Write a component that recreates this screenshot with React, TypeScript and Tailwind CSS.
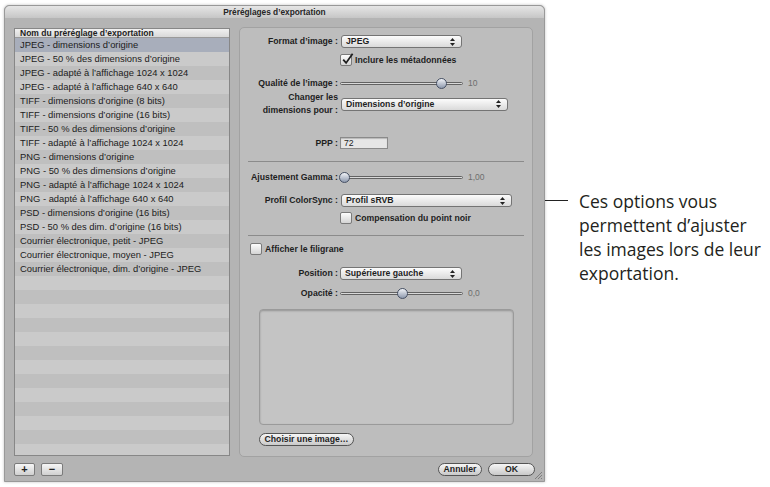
import React from "react";

const presets = [
  "JPEG - dimensions d’origine",
  "JPEG - 50 % des dimensions d’origine",
  "JPEG - adapté à l’affichage 1024 x 1024",
  "JPEG - adapté à l’affichage 640 x 640",
  "TIFF - dimensions d’origine (8 bits)",
  "TIFF - dimensions d’origine (16 bits)",
  "TIFF - 50 % des dimensions d’origine",
  "TIFF - adapté à l’affichage 1024 x 1024",
  "PNG - dimensions d’origine",
  "PNG - 50 % des dimensions d’origine",
  "PNG - adapté à l’affichage 1024 x 1024",
  "PNG - adapté à l’affichage 640 x 640",
  "PSD - dimensions d’origine (16 bits)",
  "PSD - 50 % des dim. d’origine (16 bits)",
  "Courrier électronique, petit - JPEG",
  "Courrier électronique, moyen - JPEG",
  "Courrier électronique, dim. d’origine - JPEG",
];

function Arrows() {
  return (
    <svg width="5" height="8" viewBox="0 0 5 8">
      <polygon points="2.5,0 5,3 0,3" fill="#222" />
      <polygon points="0,5 5,5 2.5,8" fill="#222" />
    </svg>
  );
}

function Popup({ text, className }: { text: string; className: string }) {
  return (
    <div
      className={`flex h-[13px] items-center justify-between rounded-[3px] border border-[#747474] bg-linear-to-b from-[#fcfcfc] to-[#dadada] pl-[4px] pr-[6px] text-[8.7px] font-bold leading-none text-[#1e1e1e] ${className}`}
    >
      <span>{text}</span>
      <Arrows />
    </div>
  );
}

function Check({ checked }: { checked?: boolean }) {
  return (
    <div className="relative h-[12px] w-[12px] shrink-0 rounded-[2px] border border-[#7a7a7a] bg-linear-to-b from-[#fdfdfd] to-[#d4d4d4]">
      {checked && (
        <svg className="absolute -top-[2px] left-0" width="13" height="13" viewBox="0 0 13 13">
          <path d="M2.2 6.6 L5.1 9.9 L11.6 0.8" fill="none" stroke="#1e1e1e" strokeWidth="1.8" />
        </svg>
      )}
    </div>
  );
}

function Slider({ knob, value }: { knob: string; value: string }) {
  return (
    <div className="flex items-center">
      <div className="relative h-[11px] w-[123px]">
        <div className="absolute left-0 right-0 top-[4px] h-[3px] rounded-full border border-[#626262] bg-[#d9d9d9]" />
        <div
          className={`absolute top-0 h-[11px] w-[11px] rounded-full border-[1.5px] border-[#465064] bg-linear-to-b from-[#f2f4f8] to-[#8f9aae] ${knob}`}
        />
      </div>
      <span className="ml-[5px] text-[8.5px] leading-none text-[#6e6e6e]">{value}</span>
    </div>
  );
}

function Label({ children }: { children: React.ReactNode }) {
  return (
    <div className="w-[98px] shrink-0 text-right text-[8.7px] font-bold leading-[13px] text-[#1e1e1e]">
      {children}
    </div>
  );
}

function Pill({ children, className }: { children: React.ReactNode; className: string }) {
  return (
    <div
      className={`flex h-[13px] items-center justify-center rounded-full border-[1.5px] border-[#545454] bg-linear-to-b from-[#f6f6f6] to-[#c9c9c9] text-[8.7px] font-bold leading-none text-[#1e1e1e] ${className}`}
    >
      {children}
    </div>
  );
}

export default function App() {
  const rows = Array.from({ length: 30 }, (_, i) => presets[i] ?? "");

  return (
    <div className="flex min-h-[487px] w-[770px] items-start bg-white font-['Liberation_Sans',Arial,sans-serif]">
      {/* Dialog window */}
      <div className="relative ml-[4px] mt-[5px] flex h-[477px] w-[541px] shrink-0 flex-col rounded-t-[5px] border border-[#999] bg-[#b4b4b4] shadow-[0_0_3px_rgba(0,0,0,0.25)]">
        <div className="flex h-[12px] items-center justify-center rounded-t-[5px] bg-linear-to-b from-[#e6e6e6] to-[#c6c6c6] text-[8.3px] font-bold leading-none text-[#262626]">
          Préréglages d’exportation
        </div>

        <div className="flex items-start gap-[9px] pl-[9px] pr-[11px] pt-[9px]">
          {/* Preset list */}
          <div className="mt-[1px] flex h-[428px] w-[216px] shrink-0 flex-col overflow-hidden border border-[#878787] bg-[#c4c4c4]">
            <div className="flex h-[9px] shrink-0 items-center border-b border-[#9a9a9a] bg-linear-to-b from-[#f0f0f0] to-[#d9d9d9] pl-[5px] text-[8.5px] font-bold leading-none text-[#1e1e1e]">
              Nom du préréglage d’exportation
            </div>
            {rows.map((name, i) => (
              <div
                key={i}
                className={`flex h-[14px] shrink-0 items-center pl-[5px] text-[9.4px] leading-none text-[#1c1c1c] ${
                  i === 0 ? "bg-[#a8aebb]" : i % 2 === 0 ? "bg-[#bfbfbf]" : "bg-[#cacaca]"
                }`}
              >
                {name}
              </div>
            ))}
          </div>

          {/* Settings group */}
          <div className="flex h-[430px] w-[294px] shrink-0 flex-col rounded-[5px] border border-[#a2a2a2] bg-[#bdbdbd] pt-[7px]">
            <div className="flex h-[13px] items-center gap-[2px]">
              <Label>Format d’image :</Label>
              <Popup text="JPEG" className="ml-[1px] w-[121px]" />
            </div>
            <div className="mt-[6px] flex h-[12px] items-center gap-[3px] pl-[100px]">
              <Check checked />
              <span className="text-[8.7px] font-bold leading-none text-[#1e1e1e]">Inclure les métadonnées</span>
            </div>
            <div className="mt-[11px] flex h-[12px] items-center gap-[2px]">
              <Label>Qualité de l’image :</Label>
              <Slider knob="left-[96px]" value="10" />
            </div>
            <div className="mt-[2px] flex h-[26px] items-center gap-[2px]">
              <Label>
                Changer les
                <br />
                dimensions pour :
              </Label>
              <Popup text="Dimensions d’origine" className="ml-[1px] w-[167px]" />
            </div>
            <div className="mt-[20px] flex h-[12px] items-center gap-[2px]">
              <Label>PPP :</Label>
              <div className="flex h-[12px] w-[48px] items-center border border-[#8a8a8a] bg-[#e6e6e6] pl-[3px] text-[8.7px] leading-none text-[#1e1e1e] shadow-[inset_0_1px_1px_rgba(0,0,0,0.2)]">
                72
              </div>
            </div>
            <div className="mx-[8px] mt-[12px] h-px bg-[#8b8b8b]" />
            <div className="mt-[9px] flex h-[12px] items-center gap-[2px]">
              <Label>Ajustement Gamma :</Label>
              <Slider knob="left-[-1px]" value="1,00" />
            </div>
            <div className="mt-[11px] flex h-[13px] items-center gap-[2px]">
              <Label>Profil ColorSync :</Label>
              <Popup text="Profil sRVB" className="ml-[1px] w-[171px]" />
            </div>
            <div className="mt-[5px] flex h-[12px] items-center gap-[3px] pl-[100px]">
              <Check />
              <span className="text-[8.7px] font-bold leading-none text-[#1e1e1e]">Compensation du point noir</span>
            </div>
            <div className="mx-[8px] mt-[11px] h-px bg-[#8b8b8b]" />
            <div className="mt-[7px] flex h-[12px] items-center gap-[3px] pl-[10px]">
              <Check />
              <span className="text-[8.7px] font-bold leading-none text-[#1e1e1e]">Afficher le filigrane</span>
            </div>
            <div className="mt-[12px] flex h-[13px] items-center gap-[2px]">
              <Label>Position :</Label>
              <Popup text="Supérieure gauche" className="w-[122px]" />
            </div>
            <div className="mt-[7px] flex h-[12px] items-center gap-[2px]">
              <Label>Opacité :</Label>
              <Slider knob="left-[57px]" value="0,0" />
            </div>
            <div className="ml-[19px] mt-[10px] h-[116px] w-[255px] rounded-[4px] border border-[#9a9a9a] bg-[#c4c4c4] shadow-[inset_0_1px_2px_rgba(0,0,0,0.25)]" />
            <div className="ml-[19px] mt-[8px] flex">
              <Pill className="w-[95px]">Choisir une image…</Pill>
            </div>
          </div>
        </div>

        {/* Bottom buttons */}
        <div className="mt-[5px] flex h-[14px] items-center justify-between pl-[9px] pr-[9px]">
          <div className="flex gap-[6px]">
            <div className="flex h-[13px] w-[21px] items-center justify-center rounded-[2px] border border-[#7b7b7b] bg-linear-to-b from-[#f6f6f6] to-[#d0d0d0] text-[11px] font-bold leading-none text-[#222]">
              +
            </div>
            <div className="flex h-[13px] w-[22px] items-center justify-center rounded-[2px] border border-[#7b7b7b] bg-linear-to-b from-[#f6f6f6] to-[#d0d0d0] text-[11px] font-bold leading-none text-[#222]">
              −
            </div>
          </div>
          <div className="flex gap-[6px]">
            <Pill className="w-[44px]">Annuler</Pill>
            <Pill className="w-[47px]">OK</Pill>
          </div>
        </div>

        <svg className="absolute bottom-[1px] right-[1px]" width="9" height="9" viewBox="0 0 9 9">
          <path d="M1 8 L8 1 M4 8 L8 4 M7 8 L8 7" stroke="#7e7e7e" strokeWidth="1" />
        </svg>
      </div>

      {/* Callout */}
      <div className="-ml-[10px] mt-[189px] flex items-start">
        <div className="mt-[11px] h-px w-[33px] bg-[#222]" />
        <div className="ml-[11px] whitespace-nowrap font-['Open_Sans',sans-serif] text-[17.5px] leading-[24px] text-[#231f20]">
          Ces options vous
          <br />
          permettent d’ajuster
          <br />
          les images lors de leur
          <br />
          exportation.
        </div>
      </div>
    </div>
  );
}
